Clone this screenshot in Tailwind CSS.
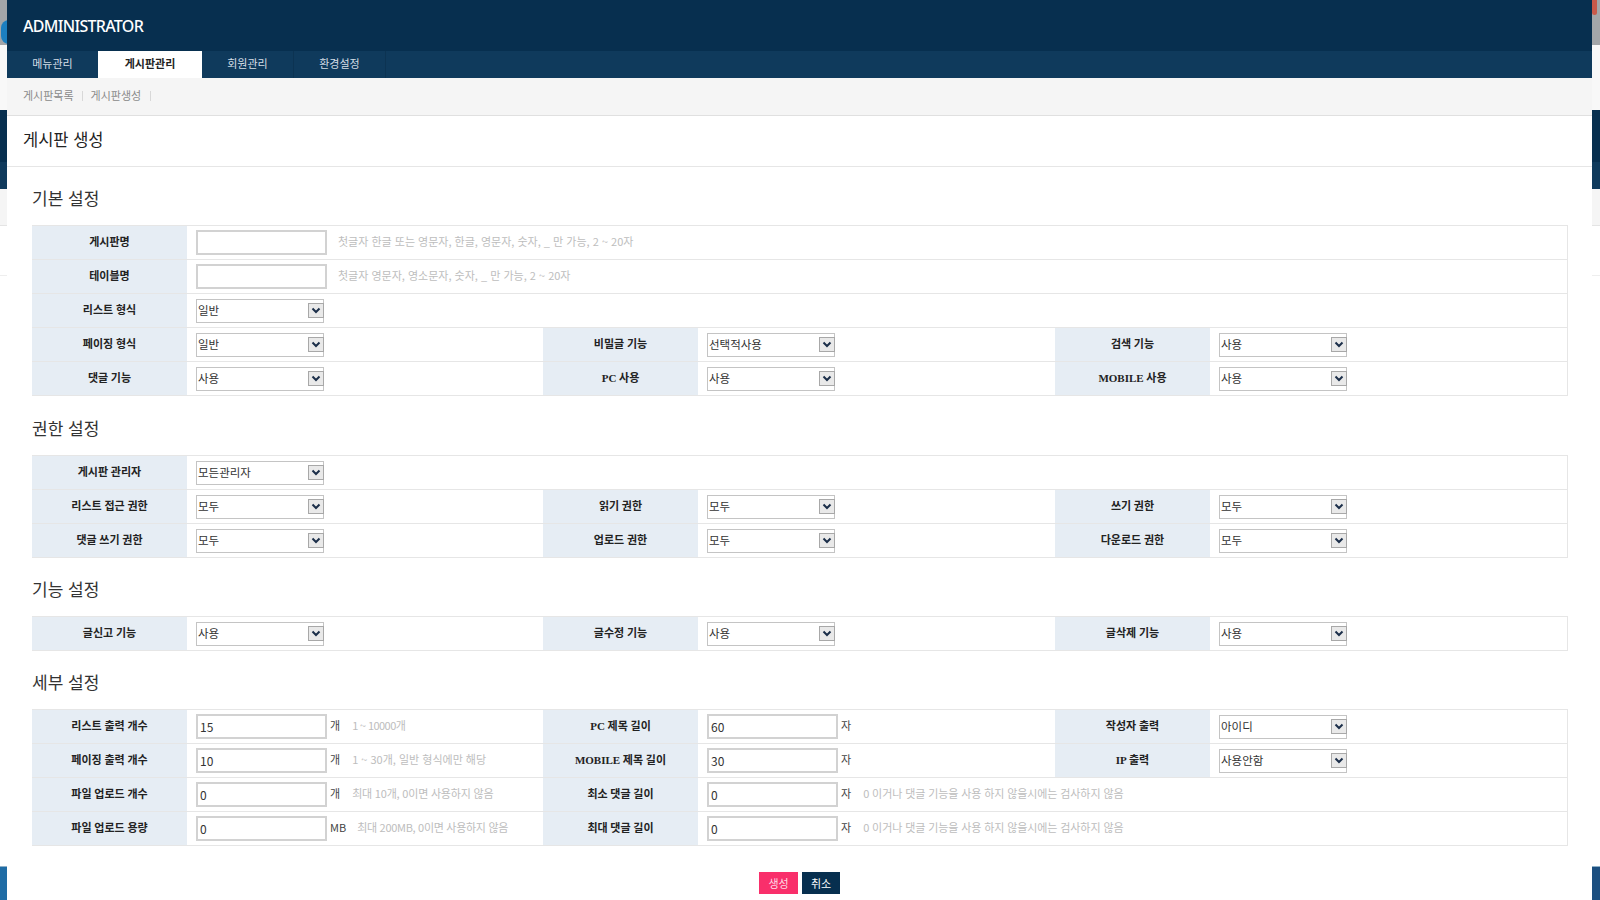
<!DOCTYPE html>
<html lang="ko">
<head>
<meta charset="utf-8">
<title>게시판 생성</title>
<script src="https://cdn.jsdelivr.net/npm/@tailwindcss/browser@4"></script>
</head>
<body class="bg-white">
<svg class="hidden"><symbol id="chev" viewBox="0 0 16 15"><rect x="0.5" y="0.5" width="15" height="14" fill="#e9e9e9" stroke="#a8a8a8"/><path d="M4.5 5.5 8 9l3.5-3.5" fill="none" stroke="#1c2f4a" stroke-width="2"/></symbol></svg>
<div class="flex w-[1600px] h-[900px] overflow-hidden font-['Noto_Sans_CJK_KR','Noto_Sans',sans-serif]">

  <div class="w-[7px] shrink-0 flex flex-col">
    <div class="h-[45px] bg-[#a3a6a9] relative overflow-hidden"><span class="absolute left-[1px] top-[20px] w-[16px] h-[24px] rounded-full bg-[#1c7fc0]"></span></div>
    <div class="h-[65px] bg-[#f8f8f8]"></div>
    <div class="h-[52px] bg-[#072f4f]"></div>
    <div class="h-[27px] bg-[#0f3a5c]"></div>
    <div class="h-[37px] bg-[#f5f5f5] border-b border-[#e4e4e4]"></div>
    <div class="h-[50px] border-b border-[#eeeeee]"></div>
    <div class="flex-1"></div>
    <div class="h-[34px] bg-[#1f6ca5] border-t border-[#8fb1c9]"></div>
  </div>

  <div class="w-[1585px] shrink-0 bg-white">
    <header class="h-[51px] bg-[#072f4f] flex items-center pl-[16px]">
      <span class="font-['Noto_Sans',sans-serif] text-[16px] font-medium tracking-[-0.7px] text-white">ADMINISTRATOR</span>
    </header>
    <nav class="h-[27px] bg-[#0f3a5c] flex text-[11px] text-[#d5dee6]">
      <a class="w-[91px] pb-[2px] flex items-center justify-center">메뉴관리</a>
      <a class="w-[104px] pb-[2px] flex items-center justify-center bg-white text-[#222] font-bold">게시판관리</a>
      <a class="w-[92px] pb-[2px] flex items-center justify-center border-r border-[#0c3352]">회원관리</a>
      <a class="w-[92px] pb-[2px] flex items-center justify-center border-r border-[#0c3352]">환경설정</a>
    </nav>
    <div class="h-[38px] pb-[2px] bg-[#f5f5f5] border-b border-[#e0e0e0] flex items-center pl-[16px] text-[11px] text-[#8a8a8a]">
      <span>게시판목록</span><span class="w-px h-[10px] bg-[#d8d8d8] mx-[8px]"></span><span>게시판생성</span><span class="w-px h-[10px] bg-[#d8d8d8] ml-[9px]"></span>
    </div>
    <div class="h-[51px] pb-[4px] border-b border-[#e6e6e6] flex items-center pl-[16px]">
      <h1 class="text-[16.5px] text-[#222]">게시판 생성</h1>
    </div>

    <div class="pl-[25px]">
      <h2 class="h-[58px] pt-[4px] flex items-center text-[17px] text-[#333]">기본 설정</h2>
      <div class="w-[1536px] border-b border-r border-[#e6e6e6] text-[11px]">
        <div class="flex h-[34px] border-t border-[#e6e6e6]">
          <div class="w-[155px] bg-[#e6edf4] flex items-center justify-center font-bold text-[#222] font-['Liberation_Serif','Noto_Sans_CJK_KR',serif]">게시판명</div>
          <div class="flex-1 pl-[9px] flex items-center gap-[11px]"><input type="text" class="w-[131px] h-[25px] border-2 border-[#d2d2d2] bg-white px-[2px] text-[12px]"><span class="pb-[2px] text-[#bdbdbd]">첫글자 한글 또는 영문자, 한글, 영문자, 숫자, _ 만 가능, 2 ~ 20자</span></div>
        </div>
        <div class="flex h-[34px] border-t border-[#e6e6e6]">
          <div class="w-[155px] bg-[#e6edf4] flex items-center justify-center font-bold text-[#222] font-['Liberation_Serif','Noto_Sans_CJK_KR',serif]">테이블명</div>
          <div class="flex-1 pl-[9px] flex items-center gap-[11px]"><input type="text" class="w-[131px] h-[25px] border-2 border-[#d2d2d2] bg-white px-[2px] text-[12px]"><span class="pb-[2px] text-[#bdbdbd]">첫글자 영문자, 영소문자, 숫자, _ 만 가능, 2 ~ 20자</span></div>
        </div>
        <div class="flex h-[34px] border-t border-[#e6e6e6]">
          <div class="w-[155px] bg-[#e6edf4] flex items-center justify-center font-bold text-[#222] font-['Liberation_Serif','Noto_Sans_CJK_KR',serif]">리스트 형식</div>
          <div class="flex-1 pl-[9px] flex items-center"><div class="relative w-[128px] h-[24px] border border-[#c4c4c4] pl-[1px] flex items-center text-[11.5px] text-[#333]">일반<svg class="absolute right-[-1px] top-[3px] w-[16px] h-[15px]"><use href="#chev"/></svg></div></div>
        </div>
        <div class="flex h-[34px] border-t border-[#e6e6e6]">
          <div class="w-[155px] bg-[#e6edf4] flex items-center justify-center font-bold text-[#222] font-['Liberation_Serif','Noto_Sans_CJK_KR',serif]">페이징 형식</div>
          <div class="w-[356px] pl-[9px] flex items-center"><div class="relative w-[128px] h-[24px] border border-[#c4c4c4] pl-[1px] flex items-center text-[11.5px] text-[#333]">일반<svg class="absolute right-[-1px] top-[3px] w-[16px] h-[15px]"><use href="#chev"/></svg></div></div>
          <div class="w-[155px] bg-[#e6edf4] flex items-center justify-center font-bold text-[#222] font-['Liberation_Serif','Noto_Sans_CJK_KR',serif]">비밀글 기능</div>
          <div class="w-[357px] pl-[9px] flex items-center"><div class="relative w-[128px] h-[24px] border border-[#c4c4c4] pl-[1px] flex items-center text-[11.5px] text-[#333]">선택적사용<svg class="absolute right-[-1px] top-[3px] w-[16px] h-[15px]"><use href="#chev"/></svg></div></div>
          <div class="w-[155px] bg-[#e6edf4] flex items-center justify-center font-bold text-[#222] font-['Liberation_Serif','Noto_Sans_CJK_KR',serif]">검색 기능</div>
          <div class="flex-1 pl-[9px] flex items-center"><div class="relative w-[128px] h-[24px] border border-[#c4c4c4] pl-[1px] flex items-center text-[11.5px] text-[#333]">사용<svg class="absolute right-[-1px] top-[3px] w-[16px] h-[15px]"><use href="#chev"/></svg></div></div>
        </div>
        <div class="flex h-[34px] border-t border-[#e6e6e6]">
          <div class="w-[155px] bg-[#e6edf4] flex items-center justify-center font-bold text-[#222] font-['Liberation_Serif','Noto_Sans_CJK_KR',serif]">댓글 기능</div>
          <div class="w-[356px] pl-[9px] flex items-center"><div class="relative w-[128px] h-[24px] border border-[#c4c4c4] pl-[1px] flex items-center text-[11.5px] text-[#333]">사용<svg class="absolute right-[-1px] top-[3px] w-[16px] h-[15px]"><use href="#chev"/></svg></div></div>
          <div class="w-[155px] bg-[#e6edf4] flex items-center justify-center font-bold text-[#222] font-['Liberation_Serif','Noto_Sans_CJK_KR',serif]">PC 사용</div>
          <div class="w-[357px] pl-[9px] flex items-center"><div class="relative w-[128px] h-[24px] border border-[#c4c4c4] pl-[1px] flex items-center text-[11.5px] text-[#333]">사용<svg class="absolute right-[-1px] top-[3px] w-[16px] h-[15px]"><use href="#chev"/></svg></div></div>
          <div class="w-[155px] bg-[#e6edf4] flex items-center justify-center font-bold text-[#222] font-['Liberation_Serif','Noto_Sans_CJK_KR',serif]">MOBILE 사용</div>
          <div class="flex-1 pl-[9px] flex items-center"><div class="relative w-[128px] h-[24px] border border-[#c4c4c4] pl-[1px] flex items-center text-[11.5px] text-[#333]">사용<svg class="absolute right-[-1px] top-[3px] w-[16px] h-[15px]"><use href="#chev"/></svg></div></div>
        </div>
      </div>

      <h2 class="h-[59px] pt-[4px] flex items-center text-[17px] text-[#333]">권한 설정</h2>
      <div class="w-[1536px] border-b border-r border-[#e6e6e6] text-[11px]">
        <div class="flex h-[34px] border-t border-[#e6e6e6]">
          <div class="w-[155px] bg-[#e6edf4] flex items-center justify-center font-bold text-[#222] font-['Liberation_Serif','Noto_Sans_CJK_KR',serif]">게시판 관리자</div>
          <div class="flex-1 pl-[9px] flex items-center"><div class="relative w-[128px] h-[24px] border border-[#c4c4c4] pl-[1px] flex items-center text-[11.5px] text-[#333]">모든관리자<svg class="absolute right-[-1px] top-[3px] w-[16px] h-[15px]"><use href="#chev"/></svg></div></div>
        </div>
        <div class="flex h-[34px] border-t border-[#e6e6e6]">
          <div class="w-[155px] bg-[#e6edf4] flex items-center justify-center font-bold text-[#222] font-['Liberation_Serif','Noto_Sans_CJK_KR',serif]">리스트 접근 권한</div>
          <div class="w-[356px] pl-[9px] flex items-center"><div class="relative w-[128px] h-[24px] border border-[#c4c4c4] pl-[1px] flex items-center text-[11.5px] text-[#333]">모두<svg class="absolute right-[-1px] top-[3px] w-[16px] h-[15px]"><use href="#chev"/></svg></div></div>
          <div class="w-[155px] bg-[#e6edf4] flex items-center justify-center font-bold text-[#222] font-['Liberation_Serif','Noto_Sans_CJK_KR',serif]">읽기 권한</div>
          <div class="w-[357px] pl-[9px] flex items-center"><div class="relative w-[128px] h-[24px] border border-[#c4c4c4] pl-[1px] flex items-center text-[11.5px] text-[#333]">모두<svg class="absolute right-[-1px] top-[3px] w-[16px] h-[15px]"><use href="#chev"/></svg></div></div>
          <div class="w-[155px] bg-[#e6edf4] flex items-center justify-center font-bold text-[#222] font-['Liberation_Serif','Noto_Sans_CJK_KR',serif]">쓰기 권한</div>
          <div class="flex-1 pl-[9px] flex items-center"><div class="relative w-[128px] h-[24px] border border-[#c4c4c4] pl-[1px] flex items-center text-[11.5px] text-[#333]">모두<svg class="absolute right-[-1px] top-[3px] w-[16px] h-[15px]"><use href="#chev"/></svg></div></div>
        </div>
        <div class="flex h-[34px] border-t border-[#e6e6e6]">
          <div class="w-[155px] bg-[#e6edf4] flex items-center justify-center font-bold text-[#222] font-['Liberation_Serif','Noto_Sans_CJK_KR',serif]">댓글 쓰기 권한</div>
          <div class="w-[356px] pl-[9px] flex items-center"><div class="relative w-[128px] h-[24px] border border-[#c4c4c4] pl-[1px] flex items-center text-[11.5px] text-[#333]">모두<svg class="absolute right-[-1px] top-[3px] w-[16px] h-[15px]"><use href="#chev"/></svg></div></div>
          <div class="w-[155px] bg-[#e6edf4] flex items-center justify-center font-bold text-[#222] font-['Liberation_Serif','Noto_Sans_CJK_KR',serif]">업로드 권한</div>
          <div class="w-[357px] pl-[9px] flex items-center"><div class="relative w-[128px] h-[24px] border border-[#c4c4c4] pl-[1px] flex items-center text-[11.5px] text-[#333]">모두<svg class="absolute right-[-1px] top-[3px] w-[16px] h-[15px]"><use href="#chev"/></svg></div></div>
          <div class="w-[155px] bg-[#e6edf4] flex items-center justify-center font-bold text-[#222] font-['Liberation_Serif','Noto_Sans_CJK_KR',serif]">다운로드 권한</div>
          <div class="flex-1 pl-[9px] flex items-center"><div class="relative w-[128px] h-[24px] border border-[#c4c4c4] pl-[1px] flex items-center text-[11.5px] text-[#333]">모두<svg class="absolute right-[-1px] top-[3px] w-[16px] h-[15px]"><use href="#chev"/></svg></div></div>
        </div>
      </div>

      <h2 class="h-[58px] pt-[4px] flex items-center text-[17px] text-[#333]">기능 설정</h2>
      <div class="w-[1536px] border-b border-r border-[#e6e6e6] text-[11px]">
        <div class="flex h-[34px] border-t border-[#e6e6e6]">
          <div class="w-[155px] bg-[#e6edf4] flex items-center justify-center font-bold text-[#222] font-['Liberation_Serif','Noto_Sans_CJK_KR',serif]">글신고 기능</div>
          <div class="w-[356px] pl-[9px] flex items-center"><div class="relative w-[128px] h-[24px] border border-[#c4c4c4] pl-[1px] flex items-center text-[11.5px] text-[#333]">사용<svg class="absolute right-[-1px] top-[3px] w-[16px] h-[15px]"><use href="#chev"/></svg></div></div>
          <div class="w-[155px] bg-[#e6edf4] flex items-center justify-center font-bold text-[#222] font-['Liberation_Serif','Noto_Sans_CJK_KR',serif]">글수정 기능</div>
          <div class="w-[357px] pl-[9px] flex items-center"><div class="relative w-[128px] h-[24px] border border-[#c4c4c4] pl-[1px] flex items-center text-[11.5px] text-[#333]">사용<svg class="absolute right-[-1px] top-[3px] w-[16px] h-[15px]"><use href="#chev"/></svg></div></div>
          <div class="w-[155px] bg-[#e6edf4] flex items-center justify-center font-bold text-[#222] font-['Liberation_Serif','Noto_Sans_CJK_KR',serif]">글삭제 기능</div>
          <div class="flex-1 pl-[9px] flex items-center"><div class="relative w-[128px] h-[24px] border border-[#c4c4c4] pl-[1px] flex items-center text-[11.5px] text-[#333]">사용<svg class="absolute right-[-1px] top-[3px] w-[16px] h-[15px]"><use href="#chev"/></svg></div></div>
        </div>
      </div>

      <h2 class="h-[58px] pt-[4px] flex items-center text-[17px] text-[#333]">세부 설정</h2>
      <div class="w-[1536px] border-b border-r border-[#e6e6e6] text-[11px]">
        <div class="flex h-[34px] border-t border-[#e6e6e6]">
          <div class="w-[155px] bg-[#e6edf4] flex items-center justify-center font-bold text-[#222] font-['Liberation_Serif','Noto_Sans_CJK_KR',serif]">리스트 출력 개수</div>
          <div class="w-[356px] pl-[9px] flex items-center"><input type="text" value="15" class="w-[131px] h-[25px] border-2 border-[#d2d2d2] bg-white px-[2px] text-[12px] text-[#333]"><span class="pb-[2px] ml-[3px] text-[#444]">개</span><span class="pb-[2px] ml-[12px] tracking-[-0.6px] text-[#bdbdbd]">1 ~ 10000개</span></div>
          <div class="w-[155px] bg-[#e6edf4] flex items-center justify-center font-bold text-[#222] font-['Liberation_Serif','Noto_Sans_CJK_KR',serif]">PC 제목 길이</div>
          <div class="w-[357px] pl-[9px] flex items-center"><input type="text" value="60" class="w-[131px] h-[25px] border-2 border-[#d2d2d2] bg-white px-[2px] text-[12px] text-[#333]"><span class="pb-[2px] ml-[3px] text-[#444]">자</span></div>
          <div class="w-[155px] bg-[#e6edf4] flex items-center justify-center font-bold text-[#222] font-['Liberation_Serif','Noto_Sans_CJK_KR',serif]">작성자 출력</div>
          <div class="flex-1 pl-[9px] flex items-center"><div class="relative w-[128px] h-[24px] border border-[#c4c4c4] pl-[1px] flex items-center text-[11.5px] text-[#333]">아이디<svg class="absolute right-[-1px] top-[3px] w-[16px] h-[15px]"><use href="#chev"/></svg></div></div>
        </div>
        <div class="flex h-[34px] border-t border-[#e6e6e6]">
          <div class="w-[155px] bg-[#e6edf4] flex items-center justify-center font-bold text-[#222] font-['Liberation_Serif','Noto_Sans_CJK_KR',serif]">페이징 출력 개수</div>
          <div class="w-[356px] pl-[9px] flex items-center"><input type="text" value="10" class="w-[131px] h-[25px] border-2 border-[#d2d2d2] bg-white px-[2px] text-[12px] text-[#333]"><span class="pb-[2px] ml-[3px] text-[#444]">개</span><span class="pb-[2px] ml-[12px] text-[#bdbdbd]">1 ~ 30개, 일반 형식에만 해당</span></div>
          <div class="w-[155px] bg-[#e6edf4] flex items-center justify-center font-bold text-[#222] font-['Liberation_Serif','Noto_Sans_CJK_KR',serif]">MOBILE 제목 길이</div>
          <div class="w-[357px] pl-[9px] flex items-center"><input type="text" value="30" class="w-[131px] h-[25px] border-2 border-[#d2d2d2] bg-white px-[2px] text-[12px] text-[#333]"><span class="pb-[2px] ml-[3px] text-[#444]">자</span></div>
          <div class="w-[155px] bg-[#e6edf4] flex items-center justify-center font-bold text-[#222] font-['Liberation_Serif','Noto_Sans_CJK_KR',serif]">IP 출력</div>
          <div class="flex-1 pl-[9px] flex items-center"><div class="relative w-[128px] h-[24px] border border-[#c4c4c4] pl-[1px] flex items-center text-[11.5px] text-[#333]">사용안함<svg class="absolute right-[-1px] top-[3px] w-[16px] h-[15px]"><use href="#chev"/></svg></div></div>
        </div>
        <div class="flex h-[34px] border-t border-[#e6e6e6]">
          <div class="w-[155px] bg-[#e6edf4] flex items-center justify-center font-bold text-[#222] font-['Liberation_Serif','Noto_Sans_CJK_KR',serif]">파일 업로드 개수</div>
          <div class="w-[356px] pl-[9px] flex items-center"><input type="text" value="0" class="w-[131px] h-[25px] border-2 border-[#d2d2d2] bg-white px-[2px] text-[12px] text-[#333]"><span class="pb-[2px] ml-[3px] text-[#444]">개</span><span class="pb-[2px] ml-[12px] tracking-[-0.2px] text-[#bdbdbd]">최대 10개, 0이면 사용하지 않음</span></div>
          <div class="w-[155px] bg-[#e6edf4] flex items-center justify-center font-bold text-[#222] font-['Liberation_Serif','Noto_Sans_CJK_KR',serif]">최소 댓글 길이</div>
          <div class="flex-1 pl-[9px] flex items-center"><input type="text" value="0" class="w-[131px] h-[25px] border-2 border-[#d2d2d2] bg-white px-[2px] text-[12px] text-[#333]"><span class="pb-[2px] ml-[3px] text-[#444]">자</span><span class="pb-[2px] ml-[12px] tracking-[-0.1px] text-[#bdbdbd]">0 이거나 댓글 기능을 사용 하지 않을시에는 검사하지 않음</span></div>
        </div>
        <div class="flex h-[34px] border-t border-[#e6e6e6]">
          <div class="w-[155px] bg-[#e6edf4] flex items-center justify-center font-bold text-[#222] font-['Liberation_Serif','Noto_Sans_CJK_KR',serif]">파일 업로드 용량</div>
          <div class="w-[356px] pl-[9px] flex items-center"><input type="text" value="0" class="w-[131px] h-[25px] border-2 border-[#d2d2d2] bg-white px-[2px] text-[12px] text-[#333]"><span class="pb-[2px] ml-[3px] text-[#444]">MB</span><span class="pb-[2px] ml-[11px] tracking-[-0.3px] text-[#bdbdbd]">최대 200MB, 0이면 사용하지 않음</span></div>
          <div class="w-[155px] bg-[#e6edf4] flex items-center justify-center font-bold text-[#222] font-['Liberation_Serif','Noto_Sans_CJK_KR',serif]">최대 댓글 길이</div>
          <div class="flex-1 pl-[9px] flex items-center"><input type="text" value="0" class="w-[131px] h-[25px] border-2 border-[#d2d2d2] bg-white px-[2px] text-[12px] text-[#333]"><span class="pb-[2px] ml-[3px] text-[#444]">자</span><span class="pb-[2px] ml-[12px] tracking-[-0.1px] text-[#bdbdbd]">0 이거나 댓글 기능을 사용 하지 않을시에는 검사하지 않음</span></div>
        </div>
      </div>
    </div>

    <div class="mt-[26px] pl-[752px] flex gap-[4px] text-[11px] text-white">
      <button class="w-[39px] h-[22px] bg-[#f92f6b] flex items-center justify-center text-[#ffd9e4]">생성</button>
      <button class="w-[38px] h-[22px] bg-[#072f4f] flex items-center justify-center">취소</button>
    </div>
  </div>

  <div class="w-[8px] shrink-0 flex flex-col">
    <div class="h-[45px] bg-[#a3a6a9] relative overflow-hidden"><span class="absolute left-0 top-0 w-[5px] h-[15px] rounded-b-sm bg-[#c9594a]"></span></div>
    <div class="h-[65px] bg-[#f8f8f8]"></div>
    <div class="h-[52px] bg-[#072f4f]"></div>
    <div class="h-[27px] bg-[#0f3a5c]"></div>
    <div class="h-[37px] bg-[#f5f5f5] border-b border-[#e4e4e4]"></div>
    <div class="h-[50px] border-b border-[#eeeeee]"></div>
    <div class="flex-1"></div>
    <div class="h-[34px] bg-[#1c4f80] border-t border-[#8fb1c9]"></div>
  </div>
</div>
</body>
</html>
